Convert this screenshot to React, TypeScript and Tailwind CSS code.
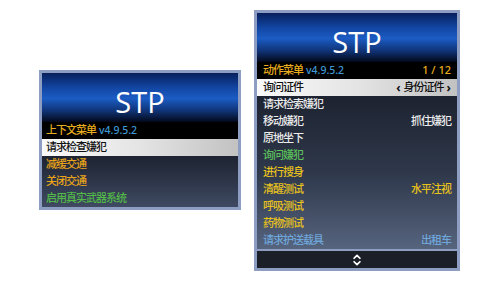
import { ChevronsUpDown } from 'lucide-react'

const font = "font-['Noto_Sans','Noto_Sans_CJK_SC',sans-serif]"
const banner =
  'h-[49px] flex justify-center pt-[14px] bg-[linear-gradient(180deg,#081f5c_0%,#1246a3_30%,#1b5cc4_52%,#0f3273_78%,#03081a_100%)]'
const stp = "font-['Open_Sans',sans-serif] text-[29px] leading-[29px] text-white"
const cjk = 'text-[11px] tracking-[-1px] font-medium'
const latin = 'text-[10.5px] font-medium'
const selected = 'bg-gradient-to-r from-[#fafafa] via-[#e4e4e4] to-[#c2c2c2] text-[#111]'

type Item = { label: string; color: string; value?: string; valueColor?: string }

const contextItems: Item[] = [
  { label: '减缓交通', color: 'text-[#eaa51a]' },
  { label: '关闭交通', color: 'text-[#eaa51a]' },
  { label: '启用真实武器系统', color: 'text-[#52b848]' },
]

const actionItems: Item[] = [
  { label: '请求检索嫌犯', color: 'text-[#ececec]' },
  { label: '移动嫌犯', color: 'text-[#ececec]', value: '抓住嫌犯', valueColor: 'text-[#ececec]' },
  { label: '原地坐下', color: 'text-[#ececec]' },
  { label: '询问嫌犯', color: 'text-[#5cbf5a]' },
  { label: '进行搜身', color: 'text-[#e8c21c]' },
  { label: '清醒测试', color: 'text-[#e8c21c]', value: '水平注视', valueColor: 'text-[#e8c21c]' },
  { label: '呼吸测试', color: 'text-[#e8c21c]' },
  { label: '药物测试', color: 'text-[#e8c21c]' },
  { label: '请求护送载具', color: 'text-[#6fa6da]', value: '出租车', valueColor: 'text-[#6fa6da]' },
]

function ContextMenu() {
  return (
    <div className={`w-[202px] mt-[60px] border-[3px] border-[#8e9ec3] ${font}`}>
      <div className={banner}>
        <span className={stp}>STP</span>
      </div>
      <div className="h-[17px] bg-black flex items-center px-[4px] gap-[3px]">
        <span className={`${cjk} text-[#e8ad1e]`}>上下文菜单</span>
        <span className={`${latin} text-[#3f98d4]`}>v4.9.5.2</span>
      </div>
      <div className={`h-[17px] flex items-center px-[4px] ${selected}`}>
        <span className={cjk}>请求检查嫌犯</span>
      </div>
      <div className="bg-gradient-to-b from-[#1d2331] to-[#3f4a62]">
        {contextItems.map((it) => (
          <div key={it.label} className="h-[17px] flex items-center px-[4px]">
            <span className={`${cjk} ${it.color}`}>{it.label}</span>
          </div>
        ))}
      </div>
    </div>
  )
}

function ActionMenu() {
  return (
    <div className={`w-[206px] border-[3px] border-[#8e9ec3] ${font}`}>
      <div className={banner}>
        <span className={stp}>STP</span>
      </div>
      <div className="h-[17px] bg-black flex items-center justify-between px-[6px]">
        <div className="flex items-center gap-[3px]">
          <span className={`${cjk} text-[#e8ad1e]`}>动作菜单</span>
          <span className={`${latin} text-[#3f98d4]`}>v4.9.5.2</span>
        </div>
        <span className="text-[11px] font-medium text-[#e8ad1e]">1 / 12</span>
      </div>
      <div className={`h-[17px] flex items-center justify-between px-[6px] ${selected}`}>
        <span className={cjk}>询问证件</span>
        <span className="flex items-center gap-[3px]">
          <span className="text-[12px] font-bold leading-none">‹</span>
          <span className={cjk}>身份证件</span>
          <span className="text-[12px] font-bold leading-none">›</span>
        </span>
      </div>
      <div className="bg-gradient-to-b from-[#1d2330] via-[#2f384b] to-[#56647e]">
        {actionItems.map((it) => (
          <div key={it.label} className="h-[17px] flex items-center justify-between px-[6px]">
            <span className={`${cjk} ${it.color}`}>{it.label}</span>
            {it.value && <span className={`${cjk} ${it.valueColor}`}>{it.value}</span>}
          </div>
        ))}
      </div>
      <div className="h-[2px] bg-[#8e9ec3]" />
      <div className="h-[17px] bg-[#1b1f28] flex items-center justify-center">
        <ChevronsUpDown size={14} color="#ffffff" strokeWidth={3} />
      </div>
    </div>
  )
}

export default function App() {
  return (
    <div className="w-[500px] h-[281px] bg-white flex items-start gap-[13px] pl-[39px] pt-[10px]">
      <ContextMenu />
      <ActionMenu />
    </div>
  )
}
